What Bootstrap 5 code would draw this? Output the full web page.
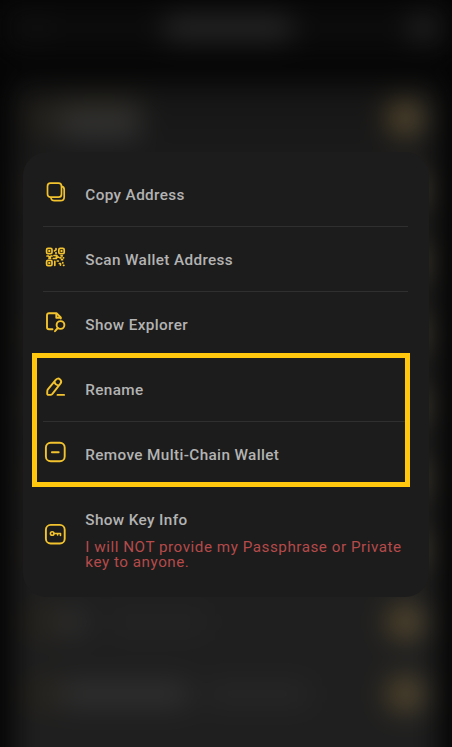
<!DOCTYPE html>
<html lang="en">
<head>
<meta charset="utf-8">
<meta name="viewport" content="width=device-width, initial-scale=1">
<title>Wallet options</title>
<link href="https://cdn.jsdelivr.net/npm/bootstrap@5.3.0/dist/css/bootstrap.min.css" rel="stylesheet">
<style>
  body { background:#040404; font-family:Roboto, "Liberation Sans", sans-serif; }
  .screen { height:747px; overflow:hidden; }
  /* blurred wallet list behind the sheet */
  .backdrop-page { filter:blur(14px); }
  .top-strip { height:56px; background:#0b0b0b; padding:0 16px 0 28px; }
  .blur-pill { border-radius:8px; background:#292929; height:22px; flex:none; }
  .wallets { margin:26px 12px 0 13px; padding:0 15px 60px 14px; background:linear-gradient(#151515,#1b1b1b 12%,#1f1f1f 70%); }
  .wallet { height:72px; }
  .coin { width:32px; height:28px; border-radius:14px; background:#29251c; flex:none; }
  .switch-dot { width:38px; height:34px; border-radius:16px; background:linear-gradient(90deg,#574524,#544c3a); flex:none; }
  .first-name { width:82px; height:40px; background:linear-gradient(#26231a,#333 60%); }
  .w-title { width:130px; }
  /* action sheet */
  .sheet { margin:152px 23px 0; width:406px; height:445px; border-radius:24px; background:#1c1c1c; padding:10px 21px 0 20px; }
  .action { height:65px; border-bottom:1px solid #2f2f2f; padding-top:1px; color:#b3b3b3; font-size:15.3px; font-weight:500; letter-spacing:.37px; line-height:18px; }
  .action svg, .key-row svg { width:24px; height:24px; flex:none; margin-right:18.3px; }
  .action svg { position:relative; top:-3px; }
  .action:nth-child(5) { border-color:transparent; }
  .key-row { padding-top:24px; color:#b3b3b3; }
  .key-row svg { margin-top:11px; }
  .key-title { font-size:15.3px; font-weight:500; letter-spacing:.37px; line-height:18px; }
  .warning { color:#b64a4a; font-size:15.2px; letter-spacing:.54px; line-height:15px; margin-top:11px; white-space:nowrap; }
  .ico { fill:none; stroke:#f2c32e; stroke-width:1.7; stroke-linecap:round; stroke-linejoin:round; }
  .ico-bold { stroke-width:1.9; }
  .focus-frame { left:32px; top:353px; width:378px; height:134px; border:5px solid #ffc70d; }
</style>
<script src="https://cdn.jsdelivr.net/npm/bootstrap@5.3.0/dist/js/bootstrap.bundle.min.js"></script>
</head>
<body>
<main class="screen position-relative">
  <div class="backdrop-page position-absolute top-0 start-0 w-100" aria-hidden="true">
    <div class="top-strip d-flex align-items-center justify-content-between">
      <div class="blur-pill" style="width:18px;background:#131313"></div>
      <div class="blur-pill" style="width:130px"></div>
      <div class="blur-pill" style="width:26px"></div>
    </div>
    <div class="wallets">
      <div class="wallet d-flex align-items-center"><div class="coin"></div><div class="blur-pill first-name me-auto"></div><div class="switch-dot"></div></div>
      <div class="wallet d-flex align-items-center justify-content-between"><div class="coin"></div><div class="switch-dot"></div></div>
      <div class="wallet d-flex align-items-center justify-content-between"><div class="coin"></div><div class="switch-dot"></div></div>
      <div class="wallet d-flex align-items-center justify-content-between"><div class="coin"></div><div class="switch-dot"></div></div>
      <div class="wallet d-flex align-items-center justify-content-between"><div class="coin"></div><div class="switch-dot"></div></div>
      <div class="wallet d-flex align-items-center justify-content-between"><div class="coin"></div><div class="switch-dot"></div></div>
      <div class="wallet d-flex align-items-center justify-content-between"><div class="coin"></div><div class="switch-dot"></div></div>
      <div class="wallet d-flex align-items-center"><div class="coin"></div><div class="blur-pill" style="width:25px;background:#333"></div><div class="blur-pill ms-4 me-auto" style="width:100px;background:#242424"></div><div class="switch-dot"></div></div>
      <div class="wallet d-flex align-items-center"><div class="coin"></div><div class="blur-pill w-title" style="background:#323232"></div><div class="blur-pill ms-3 me-auto" style="width:105px;background:#272727"></div><div class="switch-dot"></div></div>
    </div>
  </div>

  <div class="d-flex">
    <section class="sheet position-relative">
      <div class="action d-flex align-items-center">
        <svg class="ico" viewBox="0 0 24 24"><rect x="4.5" y="3.2" width="14" height="14" rx="3"/><path d="M18.7 6.4c1.6.4 2.5 1.4 2.5 3v7.5c0 2.4-1.4 3.8-3.8 3.8h-6c-2 0-3-.9-3.4-2.6"/></svg>
        <span>Copy Address</span>
      </div>
      <div class="action d-flex align-items-center">
        <svg class="ico" viewBox="0 0 24 24"><rect x="3.6" y="3.3" width="5.4" height="5.4" rx="1.4"/><rect x="15.8" y="3.3" width="5.4" height="5.4" rx="1.4"/><rect x="3.6" y="15.3" width="5.4" height="5.4" rx="1.4"/><g stroke="none" fill="#f2c32e"><rect x="5.3" y="5" width="2" height="2"/><rect x="17.5" y="5" width="2" height="2"/><rect x="5.3" y="17" width="2" height="2"/></g><path d="M13 3.5v1.3l-1.5 1.1M13 7.5v1M4 11h1.5l1.2 1.5L8 11h1M6 13.2h1.5M11 10.5h3l-.7 1.7h2.2M10.3 13.5h3.2M18 10.8h1.3M17 12.8h1M20.3 12.8h.3M18.5 14.7h1M11.8 16.3v4M14.3 16h1M16.3 18.5h1.2v1.6M19.8 17.5v.5M20.5 20.3h.4"/></svg>
        <span>Scan Wallet Address</span>
      </div>
      <div class="action d-flex align-items-center">
        <svg class="ico ico-bold" viewBox="0 0 24 24"><path d="M9.5 19.3H6c-1.3 0-2-.7-2-2V5.2c0-1.3.7-2 2-2h7.5l4.3 4.3v1M13.3 3.5v4.2h4.3"/><circle cx="17.5" cy="15" r="3.9"/><path d="m14.8 18-2.8 3.2"/></svg>
        <span>Show Explorer</span>
      </div>
      <div class="action d-flex align-items-center">
        <svg class="ico ico-bold" viewBox="0 0 24 24"><path d="M4.9 14.4 12.7 4.8c1.3-1.4 2.9-1.7 4.3-.4s1.7 2.7.4 4.3l-7.8 10c-.5.7-1 1-1.8 1.1l-2 .1c-1.1.1-1.7-.5-1.6-1.6l.1-2.2c0-.7.1-1.1.6-1.7zM11.2 6.8c.7 2.1 2.2 3.3 4.4 3.6M14.5 19.9h6.6"/></svg>
        <span>Rename</span>
      </div>
      <div class="action d-flex align-items-center">
        <svg class="ico ico-bold" viewBox="0 0 24 24"><rect x="2.9" y="2.7" width="18.8" height="18.6" rx="4.8"/><path d="M8.9 12.2h6.8"/></svg>
        <span>Remove Multi-Chain Wallet</span>
      </div>
      <div class="key-row d-flex">
        <svg class="ico ico-bold" viewBox="0 0 24 24"><rect x="2.9" y="2.9" width="18.8" height="18.6" rx="4.8"/><g stroke-width="1.6"><circle cx="9.2" cy="11.5" r="1.8"/><path d="M11 11.5h6.5v1.9M14.6 11.7v1.3"/></g></svg>
        <div>
          <div class="key-title">Show Key Info</div>
          <div class="warning">I will NOT provide my Passphrase or Private<br>key to anyone.</div>
        </div>
      </div>
    </section>
  </div>
  <div class="focus-frame position-absolute"></div>
</main>
</body>
</html>
